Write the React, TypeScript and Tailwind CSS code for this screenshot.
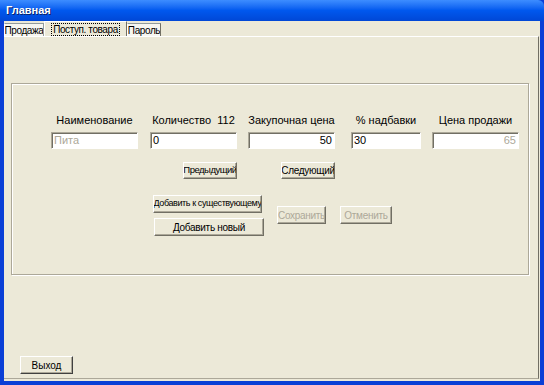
import React from 'react';

const font = { fontFamily: '"Liberation Sans", Arial, sans-serif' };

const Btn: React.FC<{ label: string; className?: string; disabled?: boolean }> = ({ label, className = '', disabled }) => (
  <div
    className={`flex items-center justify-center overflow-hidden bg-[#ECE9D8] border border-t-white border-l-white border-r-[#716F64] border-b-[#716F64] shadow-[inset_-1px_-1px_0_#ACA899] whitespace-nowrap ${
      disabled ? 'text-[#ACA899]' : 'text-black'
    } ${className}`}
  >
    {label}
  </div>
);

const Field: React.FC<{ label: string; value: string; width: string; right?: boolean; muted?: boolean }> = ({
  label,
  value,
  width,
  right,
  muted,
}) => (
  <div className={`flex flex-col items-center ${width}`}>
    <div className="h-[13px] leading-[13px] text-[11px] text-black whitespace-pre">{label}</div>
    <div
      className={`mt-[5px] h-[17px] w-full bg-white border border-t-[#ACA899] border-l-[#ACA899] border-r-white border-b-white shadow-[inset_1px_1px_0_#716F64] px-[2px] text-[11px] leading-[15px] ${
        right ? 'text-right' : 'text-left'
      } ${muted ? 'text-[#ACA899]' : 'text-black'}`}
    >
      {value}
    </div>
  </div>
);

export default function App() {
  return (
    <div style={font} className="w-[544px] h-[385px] flex flex-col bg-[#0A3FD6] overflow-hidden">
      {/* title bar */}
      <div className="h-[21px] shrink-0 flex items-center pl-[6px] bg-gradient-to-b from-[#3D8DFF] via-[#0058EE] to-[#0047D6] rounded-tr-[6px]">
        <span className="text-white font-bold text-[11px] [text-shadow:1px_1px_0_#0A246A]">Главная</span>
      </div>

      {/* body */}
      <div className="flex-1 flex flex-col mx-[4px] mb-[4px] bg-[#ECE9D8] pb-[2px]">
        {/* tabs */}
        <div className="h-[15px] shrink-0 flex items-end text-[10px] tracking-[-0.4px]">
          <div className="h-[13px] w-[40px] flex items-center justify-center overflow-hidden whitespace-nowrap bg-[#F7F6F0] border border-b-0 border-[#919B9C] border-l-white">
            Продажа
          </div>
          <div className="h-[15px] w-[83px] flex items-center justify-center overflow-hidden whitespace-nowrap bg-[#ECE9D8] border border-b-0 border-t-white border-l-white border-r-[#716F64]">
            <span className="px-[1px] leading-[11px] outline outline-1 outline-dotted outline-black">Поступ. товара</span>
          </div>
          <div className="h-[13px] w-[34px] flex items-center justify-center overflow-hidden whitespace-nowrap bg-[#F7F6F0] border border-b-0 border-[#919B9C] border-l-white border-r-[#716F64]">
            Пароль
          </div>
        </div>

        {/* tab panel */}
        <div className="flex-1 flex flex-col border-t border-t-white border-r border-r-[#716F64] border-b border-b-[#ACA899] mr-[1px]">
          {/* group box */}
          <div className="mt-[46px] ml-[7px] w-[518px] h-[192px] border border-[#ACA899] shadow-[1px_1px_0_white,inset_1px_1px_0_white] pt-[30px]">
            <div className="flex pl-[39px]">
              <Field label="Наименование" value="Пита" width="w-[87px]" muted />
              <Field label="Количество  112" value="0" width="w-[87px] ml-[12px]" />
              <Field label="Закупочная цена" value="50" width="w-[87px] ml-[11px]" right />
              <Field label="% надбавки" value="30" width="w-[70px] ml-[16px]" />
              <Field label="Цена продажи" value="65" width="w-[87px] ml-[11px]" right muted />
            </div>

            <div className="flex mt-[13px] ml-[171px] text-[10px] tracking-[-0.3px]">
              <Btn label="Предыдущий" className="w-[54px] h-[17px] text-[9.5px] tracking-[-0.5px]" />
              <Btn label="Следующий" className="w-[54px] h-[17px] ml-[44px]" />
            </div>

            <div className="flex mt-[16px] ml-[141px] text-[10px] tracking-[-0.3px]">
              <div className="flex flex-col gap-[5px]">
                <Btn label="Добавить к существующему" className="w-[109px] h-[18px] text-[9px] tracking-[-0.4px]" />
                <Btn label="Добавить новый" className="w-[110px] h-[18px] ml-[1px]" />
              </div>
              <div className="flex mt-[11px] ml-[13px] gap-[14px]">
                <Btn label="Сохранить" className="w-[49px] h-[18px]" disabled />
                <Btn label="Отменить" className="w-[52px] h-[18px]" disabled />
              </div>
            </div>
          </div>

          <div className="flex-1" />
          <Btn
            label="Выход"
            className="w-[53px] h-[18px] ml-[16px] mb-[4px] text-[10px] border-r-[#404040] border-b-[#404040] shadow-[inset_-1px_-1px_0_#716F64]"
          />
        </div>
      </div>
    </div>
  );
}
